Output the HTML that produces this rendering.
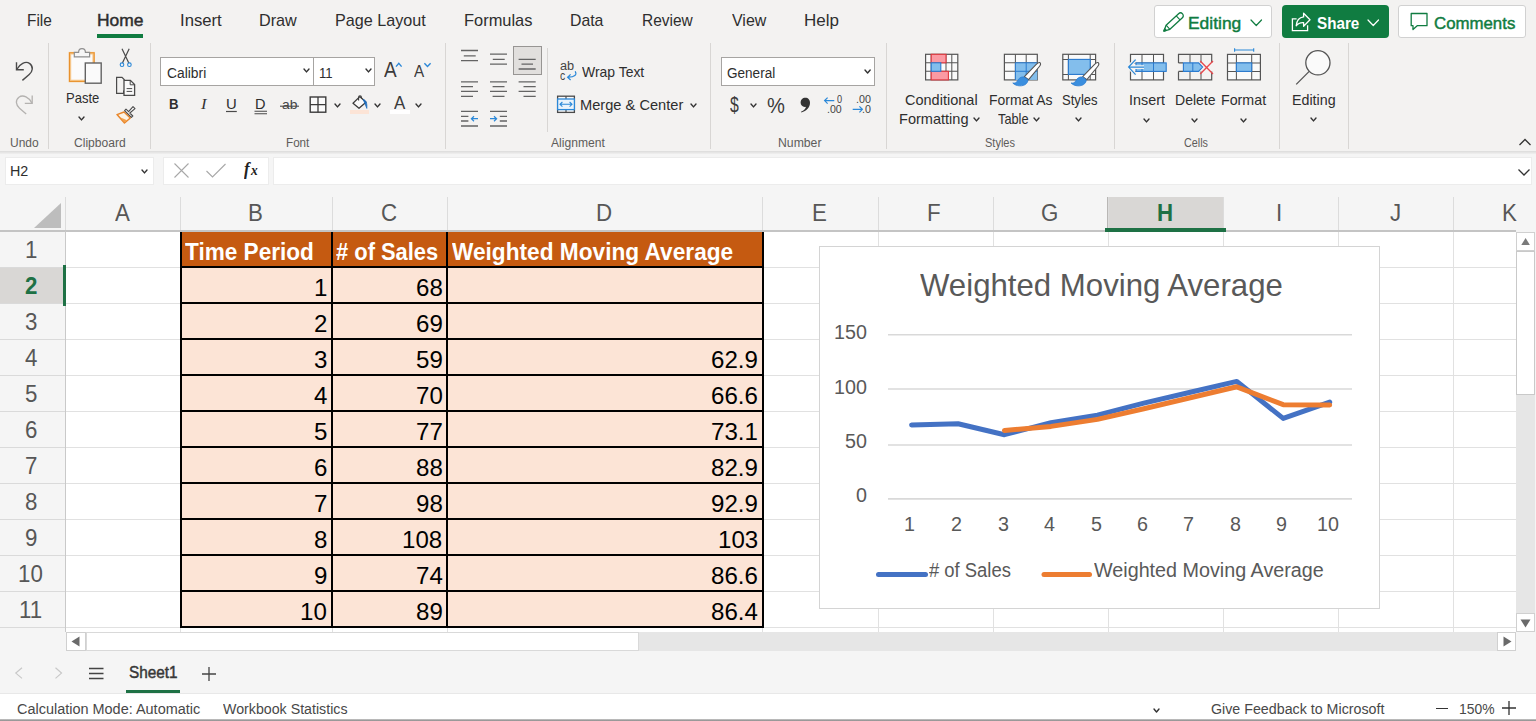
<!DOCTYPE html>
<html><head><meta charset="utf-8"><title>Excel</title>
<style>
html,body{margin:0;padding:0;}
body{width:1536px;height:721px;overflow:hidden;position:relative;background:#f5f5f5;font-family:"Liberation Sans",sans-serif;}
svg{overflow:visible}
</style></head><body>
<div style="position:absolute;left:0px;top:0px;width:1536px;height:151px;background:#f3f2f1;"></div>
<div style="position:absolute;left:0px;top:151px;width:1536px;height:3px;background:linear-gradient(#dcdbda,#f0f0f0);"></div>
<div style="position:absolute;left:0px;top:154px;width:1536px;height:43px;background:#f5f5f5;"></div>
<span style="position:absolute;left:26.69px;top:12.31px;font-size:17px;line-height:17px;color:#2e2e2e;white-space:pre;transform-origin:0 0;transform:scaleX(0.9060);">File</span>
<span style="position:absolute;left:96.87px;top:12.31px;font-size:17px;line-height:17px;color:#2e2e2e;white-space:pre;transform-origin:0 0;transform:scaleX(1.0252);-webkit-text-stroke:0.45px #2e2e2e;">Home</span>
<span style="position:absolute;left:179.52px;top:12.31px;font-size:17px;line-height:17px;color:#2e2e2e;white-space:pre;transform-origin:0 0;transform:scaleX(0.9810);">Insert</span>
<span style="position:absolute;left:259.05px;top:12.31px;font-size:17px;line-height:17px;color:#2e2e2e;white-space:pre;transform-origin:0 0;transform:scaleX(0.9520);">Draw</span>
<span style="position:absolute;left:335.05px;top:12.31px;font-size:17px;line-height:17px;color:#2e2e2e;white-space:pre;transform-origin:0 0;transform:scaleX(0.9499);">Page Layout</span>
<span style="position:absolute;left:464.03px;top:12.31px;font-size:17px;line-height:17px;color:#2e2e2e;white-space:pre;transform-origin:0 0;transform:scaleX(0.9662);">Formulas</span>
<span style="position:absolute;left:570.07px;top:12.31px;font-size:17px;line-height:17px;color:#2e2e2e;white-space:pre;transform-origin:0 0;transform:scaleX(0.9308);">Data</span>
<span style="position:absolute;left:642.09px;top:12.31px;font-size:17px;line-height:17px;color:#2e2e2e;white-space:pre;transform-origin:0 0;transform:scaleX(0.9105);">Review</span>
<span style="position:absolute;left:732.00px;top:12.31px;font-size:17px;line-height:17px;color:#2e2e2e;white-space:pre;transform-origin:0 0;transform:scaleX(0.9393);">View</span>
<span style="position:absolute;left:803.50px;top:12.31px;font-size:17px;line-height:17px;color:#2e2e2e;white-space:pre;transform-origin:0 0;transform:scaleX(0.9998);">Help</span>
<div style="position:absolute;left:97px;top:34px;width:46px;height:3.6px;background:#107c41;"></div>
<div style="position:absolute;left:1154px;top:5px;width:118px;height:33px;background:#fff;border:1px solid #d1d1d1;box-sizing:border-box;border-radius:3px;"></div>
<span style="position:absolute;left:1188.17px;top:15.41px;font-size:17px;line-height:17px;color:#107c41;white-space:pre;transform-origin:0 0;transform:scaleX(1.0252);-webkit-text-stroke:0.45px #107c41;">Editing</span>
<svg style="position:absolute;left:0px;top:0px;" width="1536" height="40" viewBox="0 0 1536 40"><g transform="translate(1163.9 31.1) rotate(-42.8)" fill="none" stroke="#107c41" stroke-width="1.3" stroke-linejoin="round"><path d="M0 0 L5.6 -2.8 H22.6 A2.8 2.8 0 0 1 22.6 2.8 H5.6 Z"/><path d="M19.4 -2.8 V2.8 M5.6 -2.8 L5.6 2.8" stroke-width="1.1"/><path d="M0 0 L2.2 -1.1 V1.1 Z" fill="#107c41"/></g></svg>
<svg style="position:absolute;left:1249.75px;top:18.55px;" width="12.5" height="7.5" viewBox="0 0 12.5 7.5"><path d="M1 1 L6.25 6.5 L11.5 1" fill="none" stroke="#107c41" stroke-width="1.2" stroke-linecap="round" stroke-linejoin="round"/></svg>
<div style="position:absolute;left:1281.5px;top:5px;width:107.5px;height:33px;background:#107c41;border-radius:4px;"></div>
<span style="position:absolute;left:1316.80px;top:15.41px;font-size:17px;line-height:17px;color:#fff;white-space:pre;transform-origin:0 0;transform:scaleX(0.8954);font-weight:700;">Share</span>
<svg style="position:absolute;left:0px;top:0px;" width="1536" height="40" viewBox="0 0 1536 40"><path d="M1296.6 18.9 H1292.4 V30.7 H1307.6 V25.2" fill="none" stroke="#fff" stroke-width="1.3"/><path d="M1303.6 13.2 L1310 19.8 L1303.6 26.2 V22.6 C1300.4 22.4 1297.9 23.4 1296.2 25.8 C1296.6 21 1299.4 17.4 1303.6 16.9 Z" fill="none" stroke="#fff" stroke-width="1.3" stroke-linejoin="round"/></svg>
<svg style="position:absolute;left:1366.75px;top:18.55px;" width="12.5" height="7.5" viewBox="0 0 12.5 7.5"><path d="M1 1 L6.25 6.5 L11.5 1" fill="none" stroke="#fff" stroke-width="1.2" stroke-linecap="round" stroke-linejoin="round"/></svg>
<div style="position:absolute;left:1398px;top:5px;width:128px;height:33px;background:#fff;border:1px solid #d1d1d1;box-sizing:border-box;border-radius:3px;"></div>
<span style="position:absolute;left:1434.20px;top:15.41px;font-size:17px;line-height:17px;color:#107c41;white-space:pre;transform-origin:0 0;transform:scaleX(0.9892);-webkit-text-stroke:0.45px #107c41;">Comments</span>
<svg style="position:absolute;left:0px;top:0px;" width="1536" height="40" viewBox="0 0 1536 40"><path d="M1411.2 13.5 H1427 V25.7 H1417.2 L1413 29.6 V25.7 H1411.2 Z" fill="none" stroke="#107c41" stroke-width="1.3" stroke-linejoin="round"/></svg>
<div style="position:absolute;left:48px;top:43px;width:1px;height:106px;background:#d8d6d4;"></div>
<div style="position:absolute;left:150px;top:43px;width:1px;height:106px;background:#d8d6d4;"></div>
<div style="position:absolute;left:445px;top:43px;width:1px;height:106px;background:#d8d6d4;"></div>
<div style="position:absolute;left:710px;top:43px;width:1px;height:106px;background:#d8d6d4;"></div>
<div style="position:absolute;left:886px;top:43px;width:1px;height:106px;background:#d8d6d4;"></div>
<div style="position:absolute;left:1114px;top:43px;width:1px;height:106px;background:#d8d6d4;"></div>
<div style="position:absolute;left:1279px;top:43px;width:1px;height:106px;background:#d8d6d4;"></div>
<div style="position:absolute;left:1348px;top:43px;width:1px;height:106px;background:#d8d6d4;"></div>
<div style="position:absolute;left:547px;top:48px;width:1px;height:84px;background:#d8d6d4;"></div>
<span style="position:absolute;left:10.00px;top:136.84px;font-size:12px;line-height:12px;color:#5e5c5a;white-space:pre;transform-origin:0 0;transform:scaleX(0.9995);">Undo</span>
<span style="position:absolute;left:74.00px;top:136.84px;font-size:12px;line-height:12px;color:#5e5c5a;white-space:pre;transform-origin:0 0;transform:scaleX(1.0061);">Clipboard</span>
<span style="position:absolute;left:286.00px;top:136.84px;font-size:12px;line-height:12px;color:#5e5c5a;white-space:pre;transform-origin:0 0;transform:scaleX(0.9725);">Font</span>
<span style="position:absolute;left:551.00px;top:136.84px;font-size:12px;line-height:12px;color:#5e5c5a;white-space:pre;transform-origin:0 0;transform:scaleX(1.0087);">Alignment</span>
<span style="position:absolute;left:777.50px;top:136.84px;font-size:12px;line-height:12px;color:#5e5c5a;white-space:pre;transform-origin:0 0;transform:scaleX(1.0191);">Number</span>
<span style="position:absolute;left:985.00px;top:136.84px;font-size:12px;line-height:12px;color:#5e5c5a;white-space:pre;transform-origin:0 0;transform:scaleX(0.9181);">Styles</span>
<span style="position:absolute;left:1184.00px;top:136.84px;font-size:12px;line-height:12px;color:#5e5c5a;white-space:pre;transform-origin:0 0;transform:scaleX(0.8998);">Cells</span>
<svg style="position:absolute;left:1518px;top:138px;" width="14" height="9" viewBox="0 0 14 9"><path d="M1.5 7 L7 1.5 L12.5 7" fill="none" stroke="#333" stroke-width="1.3"/></svg>
<div style="position:absolute;left:5px;top:157px;width:148.5px;height:27.5px;background:#fff;border:1px solid #ececec;box-sizing:border-box;"></div>
<span style="position:absolute;left:9.78px;top:163.55px;font-size:14px;line-height:14px;color:#2e2e2e;white-space:pre;transform-origin:0 0;transform:scaleX(1.0228);">H2</span>
<svg style="position:absolute;left:140.5px;top:168.75px;" width="7" height="4.9" viewBox="0 0 7 4.9"><path d="M1 1 L3.5 3.9 L6 1" fill="none" stroke="#333" stroke-width="1.4" stroke-linecap="round" stroke-linejoin="round"/></svg>
<div style="position:absolute;left:162.5px;top:157px;width:106.5px;height:27.5px;background:#fff;border:1px solid #ececec;box-sizing:border-box;"></div>
<svg style="position:absolute;left:173.6px;top:163.2px;" width="15" height="15" viewBox="0 0 15 15"><path d="M0.5 0.5 L14.5 14.5 M14.5 0.5 L0.5 14.5" stroke="#a8a8a8" stroke-width="1.1" fill="none"/></svg>
<svg style="position:absolute;left:205.6px;top:162.6px;" width="20" height="15" viewBox="0 0 20 15"><path d="M0.5 8 L6.5 14 L19.5 1" stroke="#a8a8a8" stroke-width="1.1" fill="none"/></svg>
<span style="position:absolute;left:243.60px;top:160.00px;font-size:18px;line-height:18px;color:#222;white-space:pre;transform-origin:0 0;transform:scaleX(0.9250);font-weight:700;font-style:italic;font-family:'Liberation Serif',serif;">f</span>
<span style="position:absolute;left:251.33px;top:162.91px;font-size:14.5px;line-height:14.5px;color:#222;white-space:pre;transform-origin:0 0;transform:scaleX(0.9250);font-weight:700;font-style:italic;font-family:'Liberation Serif',serif;">x</span>
<div style="position:absolute;left:273px;top:157px;width:1258.5px;height:27.5px;background:#fff;border:1px solid #ececec;box-sizing:border-box;"></div>
<svg style="position:absolute;left:1517px;top:168px;" width="14" height="9" viewBox="0 0 14 9"><path d="M1.5 1.5 L7 7 L12.5 1.5" fill="none" stroke="#333" stroke-width="1.3"/></svg>
<div style="position:absolute;left:66px;top:232px;width:1450px;height:400px;background:#fff;"></div>
<div style="position:absolute;left:0px;top:197px;width:1516px;height:34px;background:#f5f5f5;"></div>
<div style="position:absolute;left:0px;top:231px;width:65px;height:401px;background:#f5f5f5;"></div>
<div style="position:absolute;left:1107px;top:197px;width:116px;height:32px;background:#d9d7d5;"></div>
<div style="position:absolute;left:0px;top:268px;width:63px;height:35px;background:#d9d7d5;"></div>
<div style="position:absolute;left:1107px;top:197px;width:1px;height:31px;background:#b9b7b5;"></div>
<div style="position:absolute;left:1222.5px;top:197px;width:1px;height:31px;background:#b9b7b5;"></div>
<div style="position:absolute;left:180px;top:197px;width:1px;height:33px;background:#dcdcdc;"></div>
<div style="position:absolute;left:332px;top:197px;width:1px;height:33px;background:#dcdcdc;"></div>
<div style="position:absolute;left:447px;top:197px;width:1px;height:33px;background:#dcdcdc;"></div>
<div style="position:absolute;left:762px;top:197px;width:1px;height:33px;background:#dcdcdc;"></div>
<div style="position:absolute;left:878px;top:197px;width:1px;height:33px;background:#dcdcdc;"></div>
<div style="position:absolute;left:993px;top:197px;width:1px;height:33px;background:#dcdcdc;"></div>
<div style="position:absolute;left:1108px;top:197px;width:1px;height:33px;background:#dcdcdc;"></div>
<div style="position:absolute;left:1223px;top:197px;width:1px;height:33px;background:#dcdcdc;"></div>
<div style="position:absolute;left:1338px;top:197px;width:1px;height:33px;background:#dcdcdc;"></div>
<div style="position:absolute;left:1453px;top:197px;width:1px;height:33px;background:#dcdcdc;"></div>
<div style="position:absolute;left:65px;top:197px;width:1px;height:33px;background:#dcdcdc;"></div>
<div style="position:absolute;left:0px;top:230px;width:1516px;height:1.5px;background:#c4c4c4;"></div>
<div style="position:absolute;left:65px;top:231px;width:1px;height:401px;background:#c9c9c9;"></div>
<div style="position:absolute;left:0px;top:267px;width:65px;height:1px;background:#dadada;"></div>
<div style="position:absolute;left:66px;top:267px;width:1450px;height:1px;background:#e1e1e1;"></div>
<div style="position:absolute;left:0px;top:303px;width:65px;height:1px;background:#dadada;"></div>
<div style="position:absolute;left:66px;top:303px;width:1450px;height:1px;background:#e1e1e1;"></div>
<div style="position:absolute;left:0px;top:339px;width:65px;height:1px;background:#dadada;"></div>
<div style="position:absolute;left:66px;top:339px;width:1450px;height:1px;background:#e1e1e1;"></div>
<div style="position:absolute;left:0px;top:375px;width:65px;height:1px;background:#dadada;"></div>
<div style="position:absolute;left:66px;top:375px;width:1450px;height:1px;background:#e1e1e1;"></div>
<div style="position:absolute;left:0px;top:411px;width:65px;height:1px;background:#dadada;"></div>
<div style="position:absolute;left:66px;top:411px;width:1450px;height:1px;background:#e1e1e1;"></div>
<div style="position:absolute;left:0px;top:447px;width:65px;height:1px;background:#dadada;"></div>
<div style="position:absolute;left:66px;top:447px;width:1450px;height:1px;background:#e1e1e1;"></div>
<div style="position:absolute;left:0px;top:483px;width:65px;height:1px;background:#dadada;"></div>
<div style="position:absolute;left:66px;top:483px;width:1450px;height:1px;background:#e1e1e1;"></div>
<div style="position:absolute;left:0px;top:519px;width:65px;height:1px;background:#dadada;"></div>
<div style="position:absolute;left:66px;top:519px;width:1450px;height:1px;background:#e1e1e1;"></div>
<div style="position:absolute;left:0px;top:555px;width:65px;height:1px;background:#dadada;"></div>
<div style="position:absolute;left:66px;top:555px;width:1450px;height:1px;background:#e1e1e1;"></div>
<div style="position:absolute;left:0px;top:591px;width:65px;height:1px;background:#dadada;"></div>
<div style="position:absolute;left:66px;top:591px;width:1450px;height:1px;background:#e1e1e1;"></div>
<div style="position:absolute;left:0px;top:627px;width:65px;height:1px;background:#dadada;"></div>
<div style="position:absolute;left:66px;top:627px;width:1450px;height:1px;background:#e1e1e1;"></div>
<div style="position:absolute;left:180px;top:232px;width:1px;height:400px;background:#e1e1e1;"></div>
<div style="position:absolute;left:332px;top:232px;width:1px;height:400px;background:#e1e1e1;"></div>
<div style="position:absolute;left:447px;top:232px;width:1px;height:400px;background:#e1e1e1;"></div>
<div style="position:absolute;left:762px;top:232px;width:1px;height:400px;background:#e1e1e1;"></div>
<div style="position:absolute;left:878px;top:232px;width:1px;height:400px;background:#e1e1e1;"></div>
<div style="position:absolute;left:993px;top:232px;width:1px;height:400px;background:#e1e1e1;"></div>
<div style="position:absolute;left:1108px;top:232px;width:1px;height:400px;background:#e1e1e1;"></div>
<div style="position:absolute;left:1223px;top:232px;width:1px;height:400px;background:#e1e1e1;"></div>
<div style="position:absolute;left:1338px;top:232px;width:1px;height:400px;background:#e1e1e1;"></div>
<div style="position:absolute;left:1453px;top:232px;width:1px;height:400px;background:#e1e1e1;"></div>
<svg style="position:absolute;left:34px;top:203px;" width="27" height="25" viewBox="0 0 27 25"><path d="M27 0 V25 H0 Z" fill="#bdbdbd"/></svg>
<div style="position:absolute;left:1105px;top:228px;width:120.5px;height:3.5px;background:#1e7145;"></div>
<div style="position:absolute;left:62.5px;top:264.5px;width:3.5px;height:41px;background:#1e7145;"></div>
<span style="position:absolute;left:114.94px;top:202.33px;font-size:23px;line-height:23px;color:#575757;white-space:pre;transform-origin:0 0;transform:scaleX(0.9700);">A</span>
<span style="position:absolute;left:248.24px;top:202.33px;font-size:23px;line-height:23px;color:#575757;white-space:pre;transform-origin:0 0;transform:scaleX(0.9700);">B</span>
<span style="position:absolute;left:381.25px;top:202.33px;font-size:23px;line-height:23px;color:#575757;white-space:pre;transform-origin:0 0;transform:scaleX(0.9700);">C</span>
<span style="position:absolute;left:596.25px;top:202.33px;font-size:23px;line-height:23px;color:#575757;white-space:pre;transform-origin:0 0;transform:scaleX(0.9700);">D</span>
<span style="position:absolute;left:811.74px;top:202.33px;font-size:23px;line-height:23px;color:#575757;white-space:pre;transform-origin:0 0;transform:scaleX(0.9700);">E</span>
<span style="position:absolute;left:927.23px;top:202.33px;font-size:23px;line-height:23px;color:#575757;white-space:pre;transform-origin:0 0;transform:scaleX(0.9700);">F</span>
<span style="position:absolute;left:1040.77px;top:202.33px;font-size:23px;line-height:23px;color:#575757;white-space:pre;transform-origin:0 0;transform:scaleX(0.9700);">G</span>
<span style="position:absolute;left:1276.11px;top:202.33px;font-size:23px;line-height:23px;color:#575757;white-space:pre;transform-origin:0 0;transform:scaleX(0.9700);">I</span>
<span style="position:absolute;left:1389.65px;top:202.33px;font-size:23px;line-height:23px;color:#575757;white-space:pre;transform-origin:0 0;transform:scaleX(0.9700);">J</span>
<span style="position:absolute;left:1501.75px;top:202.33px;font-size:23px;line-height:23px;color:#575757;white-space:pre;transform-origin:0 0;transform:scaleX(0.9700);">K</span>
<span style="position:absolute;left:1157.05px;top:202.33px;font-size:23px;line-height:23px;color:#1e7145;white-space:pre;transform-origin:0 0;transform:scaleX(0.9700);font-weight:700;">H</span>
<span style="position:absolute;left:24.70px;top:239.13px;font-size:23px;line-height:23px;color:#575757;white-space:pre;transform-origin:0 0;transform:scaleX(0.9700);">1</span>
<span style="position:absolute;left:25.18px;top:275.13px;font-size:23px;line-height:23px;color:#1e7145;white-space:pre;transform-origin:0 0;transform:scaleX(0.9700);font-weight:700;">2</span>
<span style="position:absolute;left:25.18px;top:311.13px;font-size:23px;line-height:23px;color:#575757;white-space:pre;transform-origin:0 0;transform:scaleX(0.9700);">3</span>
<span style="position:absolute;left:24.70px;top:347.13px;font-size:23px;line-height:23px;color:#575757;white-space:pre;transform-origin:0 0;transform:scaleX(0.9700);">4</span>
<span style="position:absolute;left:25.18px;top:383.13px;font-size:23px;line-height:23px;color:#575757;white-space:pre;transform-origin:0 0;transform:scaleX(0.9700);">5</span>
<span style="position:absolute;left:24.70px;top:419.13px;font-size:23px;line-height:23px;color:#575757;white-space:pre;transform-origin:0 0;transform:scaleX(0.9700);">6</span>
<span style="position:absolute;left:24.70px;top:455.13px;font-size:23px;line-height:23px;color:#575757;white-space:pre;transform-origin:0 0;transform:scaleX(0.9700);">7</span>
<span style="position:absolute;left:24.70px;top:491.13px;font-size:23px;line-height:23px;color:#575757;white-space:pre;transform-origin:0 0;transform:scaleX(0.9700);">8</span>
<span style="position:absolute;left:24.70px;top:527.13px;font-size:23px;line-height:23px;color:#575757;white-space:pre;transform-origin:0 0;transform:scaleX(0.9700);">9</span>
<span style="position:absolute;left:18.49px;top:563.13px;font-size:23px;line-height:23px;color:#575757;white-space:pre;transform-origin:0 0;transform:scaleX(0.9700);">10</span>
<span style="position:absolute;left:19.32px;top:599.13px;font-size:23px;line-height:23px;color:#575757;white-space:pre;transform-origin:0 0;transform:scaleX(0.9700);">11</span>
<div style="position:absolute;left:181px;top:232px;width:582px;height:35px;background:#c55a11;"></div>
<div style="position:absolute;left:181px;top:268px;width:582px;height:359px;background:#fce4d6;"></div>
<div style="position:absolute;left:180.2px;top:266.2px;width:583.4px;height:1.8px;background:#000;"></div>
<div style="position:absolute;left:180.2px;top:302.2px;width:583.4px;height:1.8px;background:#000;"></div>
<div style="position:absolute;left:180.2px;top:338.2px;width:583.4px;height:1.8px;background:#000;"></div>
<div style="position:absolute;left:180.2px;top:374.2px;width:583.4px;height:1.8px;background:#000;"></div>
<div style="position:absolute;left:180.2px;top:410.2px;width:583.4px;height:1.8px;background:#000;"></div>
<div style="position:absolute;left:180.2px;top:446.2px;width:583.4px;height:1.8px;background:#000;"></div>
<div style="position:absolute;left:180.2px;top:482.2px;width:583.4px;height:1.8px;background:#000;"></div>
<div style="position:absolute;left:180.2px;top:518.2px;width:583.4px;height:1.8px;background:#000;"></div>
<div style="position:absolute;left:180.2px;top:554.2px;width:583.4px;height:1.8px;background:#000;"></div>
<div style="position:absolute;left:180.2px;top:590.2px;width:583.4px;height:1.8px;background:#000;"></div>
<div style="position:absolute;left:180.2px;top:626.2px;width:583.4px;height:1.8px;background:#000;"></div>
<div style="position:absolute;left:180.2px;top:232px;width:1.7px;height:396px;background:#000;"></div>
<div style="position:absolute;left:331px;top:232px;width:1.9px;height:396px;background:#000;"></div>
<div style="position:absolute;left:446.4px;top:232px;width:1.9px;height:396px;background:#000;"></div>
<div style="position:absolute;left:762px;top:232px;width:1.6px;height:396px;background:#000;"></div>
<span style="position:absolute;left:185.00px;top:240.35px;font-size:24.4px;line-height:24.4px;color:#fff;white-space:pre;transform-origin:0 0;transform:scaleX(0.9258);font-weight:700;">Time Period</span>
<span style="position:absolute;left:335.60px;top:240.35px;font-size:24.4px;line-height:24.4px;color:#fff;white-space:pre;transform-origin:0 0;transform:scaleX(0.8975);font-weight:700;"># of Sales</span>
<span style="position:absolute;left:451.50px;top:240.35px;font-size:24.4px;line-height:24.4px;color:#fff;white-space:pre;transform-origin:0 0;transform:scaleX(0.9290);font-weight:700;">Weighted Moving Average</span>
<span style="position:absolute;left:313.67px;top:275.85px;font-size:24.4px;line-height:24.4px;color:#000;white-space:pre;transform-origin:0 0;transform:scaleX(0.9870);">1</span>
<span style="position:absolute;left:415.78px;top:275.85px;font-size:24.4px;line-height:24.4px;color:#000;white-space:pre;transform-origin:0 0;transform:scaleX(0.9870);">68</span>
<span style="position:absolute;left:313.67px;top:311.85px;font-size:24.4px;line-height:24.4px;color:#000;white-space:pre;transform-origin:0 0;transform:scaleX(0.9870);">2</span>
<span style="position:absolute;left:415.78px;top:311.85px;font-size:24.4px;line-height:24.4px;color:#000;white-space:pre;transform-origin:0 0;transform:scaleX(0.9870);">69</span>
<span style="position:absolute;left:313.67px;top:347.85px;font-size:24.4px;line-height:24.4px;color:#000;white-space:pre;transform-origin:0 0;transform:scaleX(0.9870);">3</span>
<span style="position:absolute;left:415.78px;top:347.85px;font-size:24.4px;line-height:24.4px;color:#000;white-space:pre;transform-origin:0 0;transform:scaleX(0.9870);">59</span>
<span style="position:absolute;left:711.20px;top:347.85px;font-size:24.4px;line-height:24.4px;color:#000;white-space:pre;transform-origin:0 0;transform:scaleX(0.9870);">62.9</span>
<span style="position:absolute;left:313.67px;top:383.85px;font-size:24.4px;line-height:24.4px;color:#000;white-space:pre;transform-origin:0 0;transform:scaleX(0.9870);">4</span>
<span style="position:absolute;left:415.78px;top:383.85px;font-size:24.4px;line-height:24.4px;color:#000;white-space:pre;transform-origin:0 0;transform:scaleX(0.9870);">70</span>
<span style="position:absolute;left:711.20px;top:383.85px;font-size:24.4px;line-height:24.4px;color:#000;white-space:pre;transform-origin:0 0;transform:scaleX(0.9870);">66.6</span>
<span style="position:absolute;left:313.67px;top:419.85px;font-size:24.4px;line-height:24.4px;color:#000;white-space:pre;transform-origin:0 0;transform:scaleX(0.9870);">5</span>
<span style="position:absolute;left:415.78px;top:419.85px;font-size:24.4px;line-height:24.4px;color:#000;white-space:pre;transform-origin:0 0;transform:scaleX(0.9870);">77</span>
<span style="position:absolute;left:711.20px;top:419.85px;font-size:24.4px;line-height:24.4px;color:#000;white-space:pre;transform-origin:0 0;transform:scaleX(0.9870);">73.1</span>
<span style="position:absolute;left:313.67px;top:455.85px;font-size:24.4px;line-height:24.4px;color:#000;white-space:pre;transform-origin:0 0;transform:scaleX(0.9870);">6</span>
<span style="position:absolute;left:415.78px;top:455.85px;font-size:24.4px;line-height:24.4px;color:#000;white-space:pre;transform-origin:0 0;transform:scaleX(0.9870);">88</span>
<span style="position:absolute;left:711.20px;top:455.85px;font-size:24.4px;line-height:24.4px;color:#000;white-space:pre;transform-origin:0 0;transform:scaleX(0.9870);">82.9</span>
<span style="position:absolute;left:313.67px;top:491.85px;font-size:24.4px;line-height:24.4px;color:#000;white-space:pre;transform-origin:0 0;transform:scaleX(0.9870);">7</span>
<span style="position:absolute;left:415.78px;top:491.85px;font-size:24.4px;line-height:24.4px;color:#000;white-space:pre;transform-origin:0 0;transform:scaleX(0.9870);">98</span>
<span style="position:absolute;left:711.20px;top:491.85px;font-size:24.4px;line-height:24.4px;color:#000;white-space:pre;transform-origin:0 0;transform:scaleX(0.9870);">92.9</span>
<span style="position:absolute;left:313.67px;top:527.85px;font-size:24.4px;line-height:24.4px;color:#000;white-space:pre;transform-origin:0 0;transform:scaleX(0.9870);">8</span>
<span style="position:absolute;left:402.39px;top:527.85px;font-size:24.4px;line-height:24.4px;color:#000;white-space:pre;transform-origin:0 0;transform:scaleX(0.9870);">108</span>
<span style="position:absolute;left:717.89px;top:527.85px;font-size:24.4px;line-height:24.4px;color:#000;white-space:pre;transform-origin:0 0;transform:scaleX(0.9870);">103</span>
<span style="position:absolute;left:313.67px;top:563.85px;font-size:24.4px;line-height:24.4px;color:#000;white-space:pre;transform-origin:0 0;transform:scaleX(0.9870);">9</span>
<span style="position:absolute;left:415.78px;top:563.85px;font-size:24.4px;line-height:24.4px;color:#000;white-space:pre;transform-origin:0 0;transform:scaleX(0.9870);">74</span>
<span style="position:absolute;left:711.20px;top:563.85px;font-size:24.4px;line-height:24.4px;color:#000;white-space:pre;transform-origin:0 0;transform:scaleX(0.9870);">86.6</span>
<span style="position:absolute;left:300.28px;top:599.85px;font-size:24.4px;line-height:24.4px;color:#000;white-space:pre;transform-origin:0 0;transform:scaleX(0.9870);">10</span>
<span style="position:absolute;left:415.78px;top:599.85px;font-size:24.4px;line-height:24.4px;color:#000;white-space:pre;transform-origin:0 0;transform:scaleX(0.9870);">89</span>
<span style="position:absolute;left:711.20px;top:599.85px;font-size:24.4px;line-height:24.4px;color:#000;white-space:pre;transform-origin:0 0;transform:scaleX(0.9870);">86.4</span>
<div style="position:absolute;left:819px;top:246px;width:561px;height:363px;background:#fff;border:1.3px solid #d4d4d4;box-sizing:border-box;"></div>
<span style="position:absolute;left:920.00px;top:269.58px;font-size:30.5px;line-height:30.5px;color:#595959;white-space:pre;transform-origin:0 0;transform:scaleX(1.0223);">Weighted Moving Average</span>
<svg style="position:absolute;left:0px;top:0px;pointer-events:none;" width="1536" height="721" viewBox="0 0 1536 721"><line x1="888" x2="1352" y1="498.90" y2="498.90" stroke="#d9d9d9" stroke-width="1.7"/><line x1="888" x2="1352" y1="445.00" y2="445.00" stroke="#d9d9d9" stroke-width="1.7"/><line x1="888" x2="1352" y1="389.00" y2="389.00" stroke="#d9d9d9" stroke-width="1.7"/><line x1="888" x2="1352" y1="334.75" y2="334.75" stroke="#d9d9d9" stroke-width="1.7"/><polyline points="911.6,424.9 958.1,423.8 1004.5,434.7 1051.0,422.7 1097.4,415.1 1143.8,403.2 1190.3,392.3 1236.8,381.4 1283.2,418.4 1329.7,402.1" fill="none" stroke="#4472c4" stroke-width="5" stroke-linecap="round" stroke-linejoin="round"/><polyline points="1004.5,430.5 1051.0,426.4 1097.4,419.4 1143.8,408.7 1190.3,397.8 1236.8,386.8 1283.2,404.7 1329.7,404.9" fill="none" stroke="#ed7d31" stroke-width="5" stroke-linecap="round" stroke-linejoin="round"/><line x1="878.5" x2="925.5" y1="574.5" y2="574.5" stroke="#4472c4" stroke-width="5" stroke-linecap="round"/><line x1="1044" x2="1089.5" y1="574.5" y2="574.5" stroke="#ed7d31" stroke-width="5" stroke-linecap="round"/></svg>
<span style="position:absolute;left:855.56px;top:484.87px;font-size:20px;line-height:20px;color:#595959;white-space:pre;transform-origin:0 0;transform:scaleX(0.9850);">0</span>
<span style="position:absolute;left:844.61px;top:430.57px;font-size:20px;line-height:20px;color:#595959;white-space:pre;transform-origin:0 0;transform:scaleX(0.9850);">50</span>
<span style="position:absolute;left:833.65px;top:376.87px;font-size:20px;line-height:20px;color:#595959;white-space:pre;transform-origin:0 0;transform:scaleX(0.9850);">100</span>
<span style="position:absolute;left:833.65px;top:322.47px;font-size:20px;line-height:20px;color:#595959;white-space:pre;transform-origin:0 0;transform:scaleX(0.9850);">150</span>
<span style="position:absolute;left:904.39px;top:513.77px;font-size:20px;line-height:20px;color:#595959;white-space:pre;transform-origin:0 0;transform:scaleX(0.9850);">1</span>
<span style="position:absolute;left:950.84px;top:513.77px;font-size:20px;line-height:20px;color:#595959;white-space:pre;transform-origin:0 0;transform:scaleX(0.9850);">2</span>
<span style="position:absolute;left:997.78px;top:513.77px;font-size:20px;line-height:20px;color:#595959;white-space:pre;transform-origin:0 0;transform:scaleX(0.9850);">3</span>
<span style="position:absolute;left:1044.23px;top:513.77px;font-size:20px;line-height:20px;color:#595959;white-space:pre;transform-origin:0 0;transform:scaleX(0.9850);">4</span>
<span style="position:absolute;left:1090.68px;top:513.77px;font-size:20px;line-height:20px;color:#595959;white-space:pre;transform-origin:0 0;transform:scaleX(0.9850);">5</span>
<span style="position:absolute;left:1136.64px;top:513.77px;font-size:20px;line-height:20px;color:#595959;white-space:pre;transform-origin:0 0;transform:scaleX(0.9850);">6</span>
<span style="position:absolute;left:1183.09px;top:513.77px;font-size:20px;line-height:20px;color:#595959;white-space:pre;transform-origin:0 0;transform:scaleX(0.9850);">7</span>
<span style="position:absolute;left:1230.03px;top:513.77px;font-size:20px;line-height:20px;color:#595959;white-space:pre;transform-origin:0 0;transform:scaleX(0.9850);">8</span>
<span style="position:absolute;left:1276.48px;top:513.77px;font-size:20px;line-height:20px;color:#595959;white-space:pre;transform-origin:0 0;transform:scaleX(0.9850);">9</span>
<span style="position:absolute;left:1316.96px;top:513.77px;font-size:20px;line-height:20px;color:#595959;white-space:pre;transform-origin:0 0;transform:scaleX(0.9850);">10</span>
<span style="position:absolute;left:929.40px;top:561.09px;font-size:19.5px;line-height:19.5px;color:#595959;white-space:pre;transform-origin:0 0;transform:scaleX(0.9440);"># of Sales</span>
<span style="position:absolute;left:1094.00px;top:561.09px;font-size:19.5px;line-height:19.5px;color:#595959;white-space:pre;transform-origin:0 0;transform:scaleX(1.0125);">Weighted Moving Average</span>
<div style="position:absolute;left:1516px;top:232px;width:19px;height:400px;background:#e6e6e6;"></div>
<div style="position:absolute;left:1516px;top:232px;width:19px;height:19px;background:#fff;border:1px solid #d0d0d0;box-sizing:border-box;"></div>
<svg style="position:absolute;left:1520px;top:237px;" width="11" height="9" viewBox="0 0 11 9"><path d="M5.6 1 L9.9 8 H1.3 Z" fill="#7a7a7a"/></svg>
<div style="position:absolute;left:1516px;top:251px;width:19px;height:143.5px;background:#fff;border:1px solid #c9c9c9;box-sizing:border-box;"></div>
<div style="position:absolute;left:1516px;top:613px;width:19px;height:19px;background:#fff;border:1px solid #d0d0d0;box-sizing:border-box;"></div>
<svg style="position:absolute;left:1520px;top:618.5px;" width="11" height="9" viewBox="0 0 11 9"><path d="M0.5 0.5 H10.5 L5.5 8.5 Z" fill="#6a6a6a"/></svg>
<div style="position:absolute;left:66px;top:632px;width:1450px;height:19px;background:#e6e6e6;"></div>
<div style="position:absolute;left:66px;top:632px;width:19.5px;height:19px;background:#fff;border:1px solid #d0d0d0;box-sizing:border-box;"></div>
<svg style="position:absolute;left:71px;top:636px;" width="9" height="11" viewBox="0 0 9 11"><path d="M8.5 0.5 V10.5 L0.5 5.5 Z" fill="#6a6a6a"/></svg>
<div style="position:absolute;left:85.5px;top:632px;width:553px;height:19px;background:#fff;border:1px solid #d9d9d9;box-sizing:border-box;"></div>
<div style="position:absolute;left:1497px;top:632px;width:19px;height:19px;background:#fff;border:1px solid #d0d0d0;box-sizing:border-box;"></div>
<svg style="position:absolute;left:1502.5px;top:636px;" width="9" height="11" viewBox="0 0 9 11"><path d="M0.5 0.5 L8.5 5.5 L0.5 10.5 Z" fill="#6a6a6a"/></svg>
<svg style="position:absolute;left:15px;top:666px;" width="10" height="15" viewBox="0 0 10 15"><path d="M7 1.8 L0.8 7.1 L7 12.4" fill="none" stroke="#c8c8c8" stroke-width="1.2"/></svg>
<svg style="position:absolute;left:53.5px;top:666px;" width="10" height="15" viewBox="0 0 10 15"><path d="M1.5 1.8 L7.5 7.1 L1.5 12.4" fill="none" stroke="#c8c8c8" stroke-width="1.2"/></svg>
<svg style="position:absolute;left:89px;top:667px;" width="15" height="13" viewBox="0 0 15 13"><path d="M0 1.5 H14.5 M0 6.5 H14.5 M0 11.5 H14.5" stroke="#444" stroke-width="1.3" fill="none"/></svg>
<span style="position:absolute;left:128.60px;top:664.86px;font-size:16px;line-height:16px;color:#3a3a3a;white-space:pre;transform-origin:0 0;transform:scaleX(0.9584);-webkit-text-stroke:0.45px #333;">Sheet1</span>
<div style="position:absolute;left:126px;top:689.5px;width:54px;height:3.5px;background:#1e7145;"></div>
<svg style="position:absolute;left:201.5px;top:666.5px;" width="14" height="14" viewBox="0 0 14 14"><path d="M7 0 V14 M0 7 H14" stroke="#444" stroke-width="1.3" fill="none"/></svg>
<div style="position:absolute;left:0px;top:693px;width:1536px;height:26px;background:#fff;border-top:1px solid #e8e8e8;box-sizing:border-box;"></div>
<div style="position:absolute;left:0px;top:718.5px;width:1536px;height:2.5px;background:linear-gradient(#c8c8c8,#8a8a8a);"></div>
<span style="position:absolute;left:17.20px;top:701.85px;font-size:14px;line-height:14px;color:#484848;white-space:pre;transform-origin:0 0;transform:scaleX(1.0326);">Calculation Mode: Automatic</span>
<span style="position:absolute;left:223.00px;top:701.85px;font-size:14px;line-height:14px;color:#484848;white-space:pre;transform-origin:0 0;transform:scaleX(1.0149);">Workbook Statistics</span>
<span style="position:absolute;left:1210.50px;top:701.85px;font-size:14px;line-height:14px;color:#484848;white-space:pre;transform-origin:0 0;transform:scaleX(1.0175);">Give Feedback to Microsoft</span>
<svg style="position:absolute;left:1152.5px;top:708.0px;" width="7" height="5" viewBox="0 0 7 5"><path d="M1 1 L3.5 4 L6 1" fill="none" stroke="#333" stroke-width="1.4" stroke-linecap="round" stroke-linejoin="round"/></svg>
<div style="position:absolute;left:1435.5px;top:707.6px;width:12.5px;height:1.6px;background:#333;"></div>
<span style="position:absolute;left:1458.61px;top:701.85px;font-size:14px;line-height:14px;color:#484848;white-space:pre;transform-origin:0 0;transform:scaleX(0.9925);">150%</span>
<svg style="position:absolute;left:1502px;top:701px;" width="14" height="14" viewBox="0 0 14 14"><path d="M7 0 V14 M0 7 H14" stroke="#333" stroke-width="1.3" fill="none"/></svg>
<svg style="position:absolute;left:78.4px;top:115.55px;" width="7" height="4.9" viewBox="0 0 7 4.9"><path d="M1 1 L3.5 3.9 L6 1" fill="none" stroke="#333" stroke-width="1.4" stroke-linecap="round" stroke-linejoin="round"/></svg>
<span style="position:absolute;left:65.59px;top:90.81px;font-size:14.4px;line-height:14.4px;color:#2e2e2e;white-space:pre;transform-origin:0 0;transform:scaleX(0.9051);">Paste</span>
<div style="position:absolute;left:160px;top:57px;width:215px;height:29px;background:#fff;border:1px solid #a6a4a2;box-sizing:border-box;"></div>
<div style="position:absolute;left:313px;top:57px;width:1px;height:29px;background:#a6a4a2;"></div>
<span style="position:absolute;left:166.60px;top:65.75px;font-size:14px;line-height:14px;color:#2e2e2e;white-space:pre;transform-origin:0 0;transform:scaleX(0.9882);">Calibri</span>
<span style="position:absolute;left:319.36px;top:65.75px;font-size:14px;line-height:14px;color:#2e2e2e;white-space:pre;transform-origin:0 0;transform:scaleX(0.9384);">11</span>
<svg style="position:absolute;left:303.2px;top:68.45px;" width="7" height="4.9" viewBox="0 0 7 4.9"><path d="M1 1 L3.5 3.9 L6 1" fill="none" stroke="#333" stroke-width="1.4" stroke-linecap="round" stroke-linejoin="round"/></svg>
<svg style="position:absolute;left:364.8px;top:68.45px;" width="7" height="4.9" viewBox="0 0 7 4.9"><path d="M1 1 L3.5 3.9 L6 1" fill="none" stroke="#333" stroke-width="1.4" stroke-linecap="round" stroke-linejoin="round"/></svg>
<span style="position:absolute;left:383.60px;top:58.92px;font-size:21.6px;line-height:21.6px;color:#3b3b3b;white-space:pre;transform-origin:0 0;transform:scaleX(0.8800);">A</span>
<span style="position:absolute;left:414.30px;top:63.66px;font-size:16px;line-height:16px;color:#3b3b3b;white-space:pre;transform-origin:0 0;transform:scaleX(0.9545);">A</span>
<span style="position:absolute;left:169.32px;top:96.10px;font-size:15px;line-height:15px;color:#2e2e2e;white-space:pre;transform-origin:0 0;transform:scaleX(0.8800);font-weight:700;">B</span>
<span style="position:absolute;left:200.57px;top:95.88px;font-size:15.5px;line-height:15.5px;color:#333;white-space:pre;transform-origin:0 0;transform:scaleX(1.0714);font-style:italic;font-family:'Liberation Serif',serif;">I</span>
<span style="position:absolute;left:225.81px;top:96.10px;font-size:15px;line-height:15px;color:#2e2e2e;white-space:pre;transform-origin:0 0;transform:scaleX(0.9889);">U</span>
<span style="position:absolute;left:254.83px;top:96.10px;font-size:15px;line-height:15px;color:#2e2e2e;white-space:pre;transform-origin:0 0;transform:scaleX(0.9700);">D</span>
<span style="position:absolute;left:281.80px;top:98.37px;font-size:13.5px;line-height:13.5px;color:#444;white-space:pre;transform-origin:0 0;transform:scaleX(1.0270);">ab</span>
<svg style="position:absolute;left:333.5px;top:102.85px;" width="7" height="4.9" viewBox="0 0 7 4.9"><path d="M1 1 L3.5 3.9 L6 1" fill="none" stroke="#333" stroke-width="1.4" stroke-linecap="round" stroke-linejoin="round"/></svg>
<div style="position:absolute;left:349.7px;top:110px;width:19.2px;height:4.2px;background:#fce4d6;"></div>
<svg style="position:absolute;left:374.1px;top:102.85px;" width="7" height="4.9" viewBox="0 0 7 4.9"><path d="M1 1 L3.5 3.9 L6 1" fill="none" stroke="#333" stroke-width="1.4" stroke-linecap="round" stroke-linejoin="round"/></svg>
<span style="position:absolute;left:394.10px;top:94.69px;font-size:17.5px;line-height:17.5px;color:#3b3b3b;white-space:pre;transform-origin:0 0;transform:scaleX(0.9667);">A</span>
<div style="position:absolute;left:390.2px;top:110px;width:19.5px;height:4.2px;background:#fff;"></div>
<svg style="position:absolute;left:415.0px;top:102.85px;" width="7" height="4.9" viewBox="0 0 7 4.9"><path d="M1 1 L3.5 3.9 L6 1" fill="none" stroke="#333" stroke-width="1.4" stroke-linecap="round" stroke-linejoin="round"/></svg>
<div style="position:absolute;left:513px;top:45.5px;width:29px;height:29px;background:#e1dfdd;border:1px solid #979593;box-sizing:border-box;"></div>
<span style="position:absolute;left:559.70px;top:60.14px;font-size:12px;line-height:12px;color:#444;white-space:pre;transform-origin:0 0;transform:scaleX(1.0604);">ab</span>
<span style="position:absolute;left:559.90px;top:70.34px;font-size:12px;line-height:12px;color:#444;white-space:pre;transform-origin:0 0;transform:scaleX(0.8667);">c</span>
<span style="position:absolute;left:581.50px;top:65.41px;font-size:14.4px;line-height:14.4px;color:#2e2e2e;white-space:pre;transform-origin:0 0;transform:scaleX(0.9688);">Wrap Text</span>
<span style="position:absolute;left:580.48px;top:97.81px;font-size:14.4px;line-height:14.4px;color:#2e2e2e;white-space:pre;transform-origin:0 0;transform:scaleX(1.0170);">Merge &amp; Center</span>
<svg style="position:absolute;left:689.5px;top:102.85px;" width="7" height="4.9" viewBox="0 0 7 4.9"><path d="M1 1 L3.5 3.9 L6 1" fill="none" stroke="#333" stroke-width="1.4" stroke-linecap="round" stroke-linejoin="round"/></svg>
<div style="position:absolute;left:721px;top:57px;width:154px;height:29px;background:#fff;border:1px solid #a6a4a2;box-sizing:border-box;"></div>
<span style="position:absolute;left:726.90px;top:65.75px;font-size:14px;line-height:14px;color:#2e2e2e;white-space:pre;transform-origin:0 0;transform:scaleX(0.9679);">General</span>
<svg style="position:absolute;left:863.9px;top:68.5px;" width="7.2" height="5" viewBox="0 0 7.2 5"><path d="M1 1 L3.6 4 L6.2 1" fill="none" stroke="#333" stroke-width="1.4" stroke-linecap="round" stroke-linejoin="round"/></svg>
<span style="position:absolute;left:730.20px;top:95.00px;font-size:21.5px;line-height:21.5px;color:#3b3b3b;white-space:pre;transform-origin:0 0;transform:scaleX(0.7333);">$</span>
<svg style="position:absolute;left:750.2px;top:102.85px;" width="7" height="4.9" viewBox="0 0 7 4.9"><path d="M1 1 L3.5 3.9 L6 1" fill="none" stroke="#333" stroke-width="1.4" stroke-linecap="round" stroke-linejoin="round"/></svg>
<span style="position:absolute;left:767.00px;top:96.40px;font-size:21.5px;line-height:21.5px;color:#3b3b3b;white-space:pre;transform-origin:0 0;transform:scaleX(0.9368);">%</span>
<span style="position:absolute;left:837.00px;top:94.03px;font-size:10.6px;line-height:10.6px;color:#444;white-space:pre;transform-origin:0 0;transform:scaleX(0.8667);">0</span>
<span style="position:absolute;left:827.40px;top:104.13px;font-size:10.6px;line-height:10.6px;color:#444;white-space:pre;transform-origin:0 0;transform:scaleX(0.9976);">.00</span>
<span style="position:absolute;left:856.40px;top:94.03px;font-size:10.6px;line-height:10.6px;color:#444;white-space:pre;transform-origin:0 0;transform:scaleX(1.0111);">.00</span>
<span style="position:absolute;left:862.40px;top:104.13px;font-size:10.6px;line-height:10.6px;color:#444;white-space:pre;transform-origin:0 0;transform:scaleX(1.0063);">.0</span>
<span style="position:absolute;left:905.00px;top:92.51px;font-size:14.4px;line-height:14.4px;color:#2e2e2e;white-space:pre;transform-origin:0 0;transform:scaleX(1.0083);">Conditional</span>
<span style="position:absolute;left:898.99px;top:111.71px;font-size:14.4px;line-height:14.4px;color:#2e2e2e;white-space:pre;transform-origin:0 0;transform:scaleX(1.0107);">Formatting</span>
<svg style="position:absolute;left:972.9px;top:117.14999999999999px;" width="7" height="4.9" viewBox="0 0 7 4.9"><path d="M1 1 L3.5 3.9 L6 1" fill="none" stroke="#333" stroke-width="1.4" stroke-linecap="round" stroke-linejoin="round"/></svg>
<span style="position:absolute;left:988.53px;top:92.51px;font-size:14.4px;line-height:14.4px;color:#2e2e2e;white-space:pre;transform-origin:0 0;transform:scaleX(0.9682);">Format As</span>
<span style="position:absolute;left:998.10px;top:111.71px;font-size:14.4px;line-height:14.4px;color:#2e2e2e;white-space:pre;transform-origin:0 0;transform:scaleX(0.8867);">Table</span>
<svg style="position:absolute;left:1032.6px;top:117.14999999999999px;" width="7" height="4.9" viewBox="0 0 7 4.9"><path d="M1 1 L3.5 3.9 L6 1" fill="none" stroke="#333" stroke-width="1.4" stroke-linecap="round" stroke-linejoin="round"/></svg>
<span style="position:absolute;left:1061.60px;top:92.51px;font-size:14.4px;line-height:14.4px;color:#2e2e2e;white-space:pre;transform-origin:0 0;transform:scaleX(0.9079);">Styles</span>
<svg style="position:absolute;left:1074.8px;top:117.35px;" width="7" height="4.9" viewBox="0 0 7 4.9"><path d="M1 1 L3.5 3.9 L6 1" fill="none" stroke="#333" stroke-width="1.4" stroke-linecap="round" stroke-linejoin="round"/></svg>
<span style="position:absolute;left:1129.30px;top:92.71px;font-size:14.4px;line-height:14.4px;color:#2e2e2e;white-space:pre;transform-origin:0 0;transform:scaleX(0.9974);">Insert</span>
<svg style="position:absolute;left:1143.0px;top:117.75px;" width="7" height="4.9" viewBox="0 0 7 4.9"><path d="M1 1 L3.5 3.9 L6 1" fill="none" stroke="#333" stroke-width="1.4" stroke-linecap="round" stroke-linejoin="round"/></svg>
<span style="position:absolute;left:1174.72px;top:92.71px;font-size:14.4px;line-height:14.4px;color:#2e2e2e;white-space:pre;transform-origin:0 0;transform:scaleX(0.9755);">Delete</span>
<svg style="position:absolute;left:1190.9px;top:117.75px;" width="7" height="4.9" viewBox="0 0 7 4.9"><path d="M1 1 L3.5 3.9 L6 1" fill="none" stroke="#333" stroke-width="1.4" stroke-linecap="round" stroke-linejoin="round"/></svg>
<span style="position:absolute;left:1221.41px;top:92.71px;font-size:14.4px;line-height:14.4px;color:#2e2e2e;white-space:pre;transform-origin:0 0;transform:scaleX(0.9893);">Format</span>
<svg style="position:absolute;left:1239.8px;top:117.55px;" width="7" height="4.9" viewBox="0 0 7 4.9"><path d="M1 1 L3.5 3.9 L6 1" fill="none" stroke="#333" stroke-width="1.4" stroke-linecap="round" stroke-linejoin="round"/></svg>
<span style="position:absolute;left:1291.51px;top:92.51px;font-size:14.4px;line-height:14.4px;color:#2e2e2e;white-space:pre;transform-origin:0 0;transform:scaleX(0.9908);">Editing</span>
<svg style="position:absolute;left:1309.6px;top:117.14999999999999px;" width="7" height="4.9" viewBox="0 0 7 4.9"><path d="M1 1 L3.5 3.9 L6 1" fill="none" stroke="#333" stroke-width="1.4" stroke-linecap="round" stroke-linejoin="round"/></svg>
<svg style="position:absolute;left:0px;top:0px;pointer-events:none;" width="1536" height="155" viewBox="0 0 1536 155"><path d="M16.5 62.3 V69.7 H23.8" fill="none" stroke="#4a4a4a" stroke-width="1.4"/><path d="M16.9 69.3 C19.5 64 25.5 60.5 29.8 63.6 C33.6 66.6 32.8 71.4 29.2 74.6 L22.4 80.4" fill="none" stroke="#4a4a4a" stroke-width="1.4"/><path d="M32.2 95.5 V103.3 H24.8" fill="none" stroke="#b4b2b0" stroke-width="1.3"/><path d="M31.8 102.9 C29.2 97.6 23.2 94.1 18.9 97.2 C15.1 100.2 15.9 105 19.5 108.2 L26.2 114" fill="none" stroke="#b4b2b0" stroke-width="1.3"/><rect x="69.9" y="53.2" width="23.8" height="27.8" fill="#fbfbfb" stroke="#f7c98e" stroke-width="2.6"/><rect x="69.5" y="52.8" width="24.6" height="28.6" fill="none" stroke="#e8912d" stroke-width="1.1"/><path d="M74.3 56.8 V52.3 H78.6 C78.6 47.3 85.4 47.3 85.4 52.3 H89.6 V56.8 Z" fill="#f6f6f6" stroke="#8f8f8f" stroke-width="1.2"/><rect x="85.3" y="63" width="15.9" height="20.2" fill="#fafafa" stroke="#636363" stroke-width="1.4"/><path d="M122 48.7 L128.8 63 M129.2 48.7 L122.4 63" stroke="#4a4a4a" stroke-width="1.2" fill="none"/><circle cx="122" cy="64.7" r="1.8" fill="none" stroke="#2b88d8" stroke-width="1.1"/><circle cx="129.4" cy="64.7" r="1.8" fill="none" stroke="#2b88d8" stroke-width="1.1"/><path d="M123.6 90.6 V93.3 H116.6 V77.4 H122 L124.6 80" fill="none" stroke="#4a4a4a" stroke-width="1.2"/><path d="M124 80.4 H130.4 L134.6 84.6 V95.3 H124 Z" fill="#fafafa" stroke="#4a4a4a" stroke-width="1.3"/><path d="M130.2 80.6 V84.8 H134.4 M126.6 88.6 H132.2 M126.6 91.4 H132.2" fill="none" stroke="#4a4a4a" stroke-width="1"/><path d="M117 114.6 L124 112 L130.3 118 L124.5 123 Z" fill="#fdf3e4" stroke="#e8862a" stroke-width="1.5" stroke-linejoin="round"/><path d="M119.5 117 L124.5 122.5 L127 120.3 Z" fill="#f3a04a"/><path d="M124.6 110.6 L131.4 117.4 L132.8 116 L129.8 113 L135 108.6 L133 106.6 L128.6 111.6 L126 109.2 Z" fill="#fafafa" stroke="#4a4a4a" stroke-width="1.1" stroke-linejoin="round"/><path d="M396 66.6 L398.8 63.4 L401.6 66.6" fill="none" stroke="#2b88d8" stroke-width="1.4"/><path d="M424.4 63.2 L427.5 66.4 L430.6 63.2" fill="none" stroke="#2b88d8" stroke-width="1.4"/><path d="M226 111.5 H236.8" stroke="#4a4a4a" stroke-width="1.2"/><path d="M254.5 111.3 H267 M254.5 113.8 H267" stroke="#4a4a4a" stroke-width="1.1"/><path d="M280 106.2 H299" stroke="#4a4a4a" stroke-width="1.1"/><rect x="310.2" y="97" width="15.6" height="15.2" fill="#fafafa" stroke="#3b3b3b" stroke-width="1.4"/><path d="M318 97 V112.2 M310.2 104.6 H325.8" stroke="#3b3b3b" stroke-width="1.3"/><path d="M353 103.3 L359.8 96.6 L366 102.2 L359 108.3 Z" fill="#fafafa" stroke="#3b3b3b" stroke-width="1.3" stroke-linejoin="round"/><path d="M358.6 100.6 V97.2 C358.6 95.2 361.4 95.2 361.4 97.2 V98.4" fill="none" stroke="#3b3b3b" stroke-width="1.1"/><path d="M363.2 99.6 C366.2 100.2 367.2 103.5 366.8 108.4 C365.6 105.4 364.8 102.6 363.2 99.6 Z" fill="#1e6fc0" stroke="#1e6fc0" stroke-width="0.8"/><path d="M461 50.5 H478 M463.8 55.8 H475.7 M461 60.7 H478 " stroke="#646464" stroke-width="1.3" fill="none"/><path d="M490 54.2 H507 M492.8 59.3 H504.7 M490 64.1 H507 " stroke="#646464" stroke-width="1.3" fill="none"/><path d="M518.6 59.4 H535.7 M521.5 64.2 H533 M518.6 69 H535.7 " stroke="#646464" stroke-width="1.3" fill="none"/><path d="M461 81.9 H478 M461 86.6 H473 M461 91.4 H478 M461 96.3 H473 " stroke="#646464" stroke-width="1.3" fill="none"/><path d="M490 81.9 H507 M492.6 86.6 H504.5 M490 91.4 H507 M492.6 96.3 H504.5 " stroke="#646464" stroke-width="1.3" fill="none"/><path d="M518.6 81.9 H535.7 M523.5 86.6 H535.7 M518.6 91.4 H535.7 M523.5 96.3 H535.7 " stroke="#646464" stroke-width="1.3" fill="none"/><path d="M461 111.4 H478 M461 116.4 H468.4 M461 121 H468.4 M461 126 H478 " stroke="#646464" stroke-width="1.3" fill="none"/><path d="M490 111.4 H507 M499.8 116.4 H507 M499.8 121 H507 M490 126 H507 " stroke="#646464" stroke-width="1.3" fill="none"/><path d="M478 118.7 H471.4 M474 116.2 L471.4 118.7 L474 121.2" fill="none" stroke="#2b88d8" stroke-width="1.2"/><path d="M490 118.7 H496.6 M494 116.2 L496.6 118.7 L494 121.2" fill="none" stroke="#2b88d8" stroke-width="1.2"/><path d="M575.2 71.2 C577.2 74.6 574.6 77.4 568 77.2 M570.6 74.4 L567.6 77.2 L570.6 80" fill="none" stroke="#2b88d8" stroke-width="1.2"/><rect x="557.6" y="96.2" width="16.8" height="16.2" fill="#fafafa" stroke="#4a4a4a" stroke-width="1.3"/><path d="M566 96.2 V99 M566 109.6 V112.4" stroke="#4a4a4a" stroke-width="1.2"/><rect x="557.6" y="99" width="16.8" height="10.6" fill="#eaf3fb" stroke="#2b88d8" stroke-width="1.3"/><path d="M560 104.3 H572 M562.4 102 L560 104.3 L562.4 106.6 M569.6 102 L572 104.3 L569.6 106.6" fill="none" stroke="#2b88d8" stroke-width="1.1"/><path d="M805.3 97.7 C808.2 97.7 810 99.8 810 102.8 C810 107.4 806.6 111 801.4 112.6 L801 111.8 C804 110.4 805.8 108.6 806 106.8 C805.6 107 805.2 107 804.8 107 C802.2 107 800.6 105 800.6 102.6 C800.6 99.8 802.6 97.7 805.3 97.7 Z" fill="#333"/><path d="M834.3 100.6 H824.6 M827.6 97.6 L824.6 100.6 L827.6 103.6" fill="none" stroke="#2b88d8" stroke-width="1.2"/><path d="M852.7 109.3 H862.4 M859.4 106.3 L862.4 109.3 L859.4 112.3" fill="none" stroke="#2b88d8" stroke-width="1.2"/><rect x="925.6" y="54.3" width="32.19999999999993" height="25.60000000000001" fill="#fafafa" stroke="#555" stroke-width="1.2"/><path d="M931.2 54.3 V79.9 M946 54.3 V79.9 M951.8 54.3 V79.9 M925.6 62.8 H957.8 M925.6 71.3 H957.8 " stroke="#555" stroke-width="1.02" fill="none"/><rect x="931.2" y="54.3" width="14.8" height="8.5" fill="#fb9aa3" stroke="#e0383f" stroke-width="1.1"/><rect x="931.2" y="71.3" width="17.2" height="8.6" fill="#fb9aa3" stroke="#e0383f" stroke-width="1.1"/><rect x="931.2" y="62.8" width="9.6" height="8.5" fill="#83beec" stroke="#2a7bd0" stroke-width="1.1"/><rect x="1004.4" y="54.3" width="32.89999999999998" height="25.60000000000001" fill="#fafafa" stroke="#555" stroke-width="1.2"/><path d="M1015.4 54.3 V79.9 M1026.2 54.3 V79.9 M1004.4 62.8 H1037.3 M1004.4 71.3 H1037.3 " stroke="#555" stroke-width="1.02" fill="none"/><rect x="1015.4" y="62.8" width="21.9" height="17.1" fill="#83beec"/><path d="M1026.2 62.8 V79.9 M1015.4 71.3 H1037.3 M1015.4 62.8 V79.9 M1015.4 62.8 H1037.3" stroke="#2a7bd0" stroke-width="1" fill="none"/><path d="M1039.9 62.6 C1041 63.6 1040.6 65.2 1039 67 L1028.6 79.6 L1024.4 76.6 L1036 64.6 C1037.6 63 1038.8 62 1039.9 62.6 Z" fill="#fff" stroke="#555" stroke-width="1.1" stroke-linejoin="round"/><path d="M1024 77 C1021 76.4 1018.4 78.6 1017.4 81 C1016.6 82.8 1014.6 83.4 1012.8 83 C1016 86.6 1023.4 86.8 1026.4 83.6 C1028.2 81.6 1028 79.8 1027.6 79.4 Z" fill="#3a8ede" stroke="#2a7bd0" stroke-width="0.8"/><rect x="1062.8" y="54.3" width="32.799999999999955" height="25.60000000000001" fill="#fafafa" stroke="#555" stroke-width="1.2"/><path d="M1068.4 54.3 V79.9 M1090.2 54.3 V79.9 M1062.8 59.4 H1095.6 M1062.8 74.4 H1095.6 " stroke="#555" stroke-width="1.02" fill="none"/><rect x="1068.4" y="59.4" width="21.8" height="15" fill="#83beec" stroke="#2a7bd0" stroke-width="1.1"/><path d="M1098.2 62.6 C1099.3 63.6 1098.8999999999999 65.2 1097.3 67 L1086.8999999999999 79.6 L1082.7 76.6 L1094.3 64.6 C1095.8999999999999 63 1097.1 62 1098.2 62.6 Z" fill="#fff" stroke="#555" stroke-width="1.1" stroke-linejoin="round"/><path d="M1082.3 77 C1079.3 76.4 1076.7 78.6 1075.7 81 C1074.9 82.8 1072.9 83.4 1071.1 83 C1074.3 86.6 1081.7 86.8 1084.7 83.6 C1086.5 81.6 1086.3 79.8 1085.8999999999999 79.4 Z" fill="#3a8ede" stroke="#2a7bd0" stroke-width="0.8"/><rect x="1130.5" y="54.4" width="33.0" height="25.500000000000007" fill="#fafafa" stroke="#555" stroke-width="1.2"/><path d="M1142 54.4 V79.9 M1153.5 54.4 V79.9 M1130.5 62.9 H1163.5 M1130.5 71.4 H1163.5 " stroke="#555" stroke-width="1.02" fill="none"/><rect x="1136" y="62.9" width="30.2" height="8.5" fill="#83beec" stroke="#2a7bd0" stroke-width="1.1"/><path d="M1142 62.9 V71.4 M1153.5 62.9 V71.4" stroke="#2a7bd0" stroke-width="1"/><path d="M1135.6 59.6 L1128.6 67.1 L1135.6 74.6 M1128.8 67.1 H1144" fill="none" stroke="#f3f2f1" stroke-width="3.6"/><path d="M1135.6 59.6 L1128.6 67.1 L1135.6 74.6 M1128.8 67.1 H1144" fill="none" stroke="#2b88d8" stroke-width="1.2"/><path d="M1178.5 62.9 V54.4 H1211.7 V62.9 M1178.5 71.4 V79.9 H1211.7 V71.4 M1178.5 71.4 H1183 M1178.5 62.9 H1183" fill="none" stroke="#555" stroke-width="1.2"/><path d="M1190 54.4 V62.9 M1201 54.4 V62.9 M1190 71.4 V79.9 M1201 71.4 V79.9" stroke="#555" stroke-width="1"/><path d="M1183.4 62.9 H1198.6 L1202.6 67.1 L1198.6 71.4 H1183.4 Z" fill="#83beec" stroke="#2a7bd0" stroke-width="1.1"/><path d="M1192.8 62.9 V71.4" stroke="#2a7bd0" stroke-width="1"/><path d="M1200.2 61 L1213 74 M1213 61 L1200.2 74" stroke="#e8474c" stroke-width="1.3" fill="none"/><rect x="1227.5" y="54.4" width="32.90000000000009" height="25.500000000000007" fill="#fafafa" stroke="#555" stroke-width="1.2"/><path d="M1236.4 54.4 V79.9 M1251.7 54.4 V79.9 M1227.5 62.9 H1260.4 M1227.5 71.4 H1260.4 " stroke="#555" stroke-width="1.02" fill="none"/><rect x="1236.4" y="62.9" width="15.3" height="8.5" fill="#83beec" stroke="#2a7bd0" stroke-width="1.1"/><path d="M1234.6 50 H1253.7 M1234.6 48.2 V51.8 M1253.7 48.2 V51.8" stroke="#2b88d8" stroke-width="1.1" fill="none"/><circle cx="1317.9" cy="62.8" r="12.1" fill="#fafafa" stroke="#555" stroke-width="1.3"/><path d="M1309.2 71.4 L1296.2 84.4" stroke="#555" stroke-width="1.3"/></svg>
</body></html>
